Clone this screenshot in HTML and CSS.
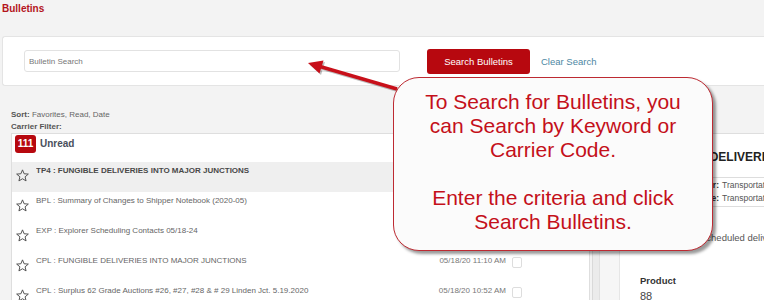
FILE: index.html
```html
<!DOCTYPE html>
<html lang="en">
<head>
    <meta charset="UTF-8">
    <title>Bulletins</title>
    <link rel="stylesheet" href="styles.css">
</head>
<body>
    <h1 class="page-title">Bulletins</h1>

    <!-- Search bar -->
    <div class="search-panel">
        <input type="text" class="search-input" placeholder="Bulletin Search">
        <button type="button" class="search-btn">Search Bulletins</button>
        <a href="#" class="clear-link">Clear Search</a>
    </div>

    <div class="sort-info">
        <div><b>Sort:</b> Favorites, Read, Date</div>
        <div><b>Carrier Filter:</b></div>
    </div>

    <div class="main">
        <!-- Bulletin list -->
        <div class="list-panel">
            <div class="list-head">
                <span class="badge">111</span>
                <span class="unread">Unread</span>
            </div>
            <div class="row active">
                <svg class="star" viewBox="0 0 12 12"><path d="M6 .8l1.5 3.6 3.9.3-3 2.5.9 3.8L6 9 2.7 11l.9-3.8-3-2.5 3.9-.3z"/></svg>
                <span class="row-title">TP4 : FUNGIBLE DELIVERIES INTO MAJOR JUNCTIONS</span>
                <span class="row-date">05/18/20 2:15 PM</span>
                <span class="check"></span>
            </div>
            <div class="row">
                <svg class="star" viewBox="0 0 12 12"><path d="M6 .8l1.5 3.6 3.9.3-3 2.5.9 3.8L6 9 2.7 11l.9-3.8-3-2.5 3.9-.3z"/></svg>
                <span class="row-title">BPL : Summary of Changes to Shipper Notebook (2020-05)</span>
                <span class="row-date">05/18/20 1:40 PM</span>
                <span class="check"></span>
            </div>
            <div class="row">
                <svg class="star" viewBox="0 0 12 12"><path d="M6 .8l1.5 3.6 3.9.3-3 2.5.9 3.8L6 9 2.7 11l.9-3.8-3-2.5 3.9-.3z"/></svg>
                <span class="row-title">EXP : Explorer Scheduling Contacts 05/18-24</span>
                <span class="row-date">05/18/20 11:32 AM</span>
                <span class="check"></span>
            </div>
            <div class="row">
                <svg class="star" viewBox="0 0 12 12"><path d="M6 .8l1.5 3.6 3.9.3-3 2.5.9 3.8L6 9 2.7 11l.9-3.8-3-2.5 3.9-.3z"/></svg>
                <span class="row-title">CPL : FUNGIBLE DELIVERIES INTO MAJOR JUNCTIONS</span>
                <span class="row-date">05/18/20 11:10 AM</span>
                <span class="check"></span>
            </div>
            <div class="row">
                <svg class="star" viewBox="0 0 12 12"><path d="M6 .8l1.5 3.6 3.9.3-3 2.5.9 3.8L6 9 2.7 11l.9-3.8-3-2.5 3.9-.3z"/></svg>
                <span class="row-title">CPL : Surplus 62 Grade Auctions #26, #27, #28 &amp; # 29 Linden Jct. 5.19.2020</span>
                <span class="row-date">05/18/20 10:52 AM</span>
                <span class="check"></span>
            </div>
        </div>

        <!-- Bulletin detail -->
        <div class="detail-panel">
            <div class="strip-dark"></div>
            <div class="strip-light"></div>
            <div class="detail-body">
                <h2 class="detail-title">FUNGIBLE DELIVERIES INTO MAJOR JUNCTIONS</h2>
                <div class="meta-box">
                    <span class="meta-label">Carrier:</span><span>Transportation</span>
                    <span class="meta-label">Type:</span><span>Transportation</span>
                </div>
                <p class="detail-note">Scheduled deliveries into major junctions</p>
                <div class="product-label">Product</div>
                <div class="product-value">88</div>
            </div>
        </div>
    </div>

    <!-- Tutorial callout -->
    <svg class="arrow" width="764" height="300" viewBox="0 0 764 300">
        <g transform="translate(1.5 1.5)" opacity="0.25">
            <line x1="397" y1="89" x2="320" y2="66.5" stroke="#000" stroke-width="3.5"/>
            <polygon points="308,63 323.5,60.5 319.5,73.5" fill="#000"/>
        </g>
        <line x1="397" y1="89" x2="320" y2="66.5" stroke="#c8101a" stroke-width="3.5"/>
        <polygon points="308,63 323.5,60.5 319.5,73.5" fill="#c8101a"/>
    </svg>
    <div class="callout">
        <p>To Search for Bulletins, you can Search by Keyword or Carrier Code.</p>
        <p>Enter the criteria and click Search Bulletins.</p>
    </div>
</body>
</html>
```

FILE: styles.css
```css
body {
    margin: 0;
    height: 300px;
    background: #f3f3f3;
    font-family: "Liberation Sans", Arial, sans-serif;
    color: #555;
    overflow: hidden;
}
.page-title {
    margin: 0;
    padding: 2px 2px;
    font-size: 10px;
    line-height: 13px;
    color: #b3141c;
}
.search-panel {
    margin: 19px 0 0 2px;
    height: 48px;
    background: #fff;
    border: 1px solid #e4e4e4;
    border-right: none;
    border-radius: 3px 0 0 3px;
    display: flex;
    align-items: center;
    padding-left: 21px;
}
.search-input {
    width: 376px;
    height: 22px;
    box-sizing: border-box;
    border: 1px solid #e2e2e2;
    border-radius: 3px;
    padding: 0 4px;
    font-family: inherit;
    font-size: 8px;
    color: #777;
}
.search-input::placeholder {
    color: #777;
}
.search-btn {
    margin-left: 27px;
    width: 103px;
    height: 25px;
    border: none;
    border-radius: 3px;
    background: #b7080f;
    color: #fff;
    font-family: inherit;
    font-size: 9.5px;
}
.clear-link {
    margin-left: 11px;
    font-size: 9.5px;
    color: #4d87a3;
    text-decoration: none;
}
.sort-info {
    margin: 23px 0 0 11px;
    font-size: 8px;
    line-height: 12px;
    color: #666;
}
.sort-info b {
    color: #555;
}
.main {
    display: flex;
    margin-left: 11px;
    height: 167px;
    overflow: hidden;
}
.list-panel {
    width: 579px;
    flex-shrink: 0;
    box-sizing: border-box;
    background: #fff;
    border: 1px solid #dedede;
    border-bottom: none;
}
.list-head {
    height: 28px;
    display: flex;
    align-items: flex-start;
    padding: 1px 0 0 3px;
    box-sizing: border-box;
}
.badge {
    width: 21px;
    height: 18px;
    border-radius: 3px;
    background: #b7080f;
    color: #fff;
    font-size: 10px;
    font-weight: bold;
    line-height: 18px;
    text-align: center;
}
.unread {
    margin-left: 4px;
    font-size: 10px;
    font-weight: bold;
    line-height: 18px;
    color: #4a4f5c;
}
.row {
    height: 30px;
    display: flex;
    align-items: flex-start;
    padding-left: 4px;
    font-size: 8px;
    color: #666;
}
.row.active {
    background: #efefef;
}
.row.active .row-title {
    font-weight: bold;
    color: #484848;
}
.star {
    width: 13px;
    height: 13px;
    margin-top: 7px;
    fill: none;
    stroke: #505050;
    stroke-width: 0.9;
    stroke-linejoin: round;
}
.row-title {
    margin: 4px 0 0 7px;
    line-height: 10px;
    flex: 1;
    white-space: nowrap;
    overflow: hidden;
}
.row-date {
    margin-top: 4px;
    line-height: 10px;
    color: #777;
    white-space: nowrap;
}
.check {
    width: 10px;
    height: 11px;
    box-sizing: border-box;
    margin: 5px 67px 0 6px;
    border: 1px solid #ddd;
    border-radius: 2px;
}
.detail-panel {
    flex: 1;
    min-width: 0;
    margin-left: 2px;
    display: flex;
    background: #fff;
    border-top: 1px solid #dedede;
}
.strip-dark {
    width: 6px;
    flex-shrink: 0;
    background: #ebebeb;
    border-left: 1px solid #d9d9d9;
}
.strip-light {
    width: 19px;
    flex-shrink: 0;
    background: #f6f6f6;
    border-left: 1px solid #e0e0e0;
    border-right: 1px solid #e6e6e6;
}
.detail-body {
    flex: 1;
    min-width: 0;
    padding-left: 20px;
    white-space: nowrap;
    overflow: hidden;
}
.detail-title {
    margin: 16px 0 0 5px;
    font-size: 12px;
    line-height: 14px;
    color: #222;
}
.meta-box {
    margin: 13px 0 0 31px;
    padding: 1px 0;
    border-top: 1px solid #ddd;
    border-bottom: 1px solid #ddd;
    display: grid;
    grid-template-columns: 48px 200px;
    column-gap: 3px;
    font-size: 8.5px;
    line-height: 13px;
    color: #555;
}
.meta-label {
    text-align: right;
    font-weight: bold;
    color: #333;
}
.detail-note {
    margin: 25px 0 0 60px;
    font-size: 9.5px;
    line-height: 12px;
    color: #555;
}
.product-label {
    margin-top: 31px;
    font-size: 9.5px;
    font-weight: bold;
    line-height: 12px;
    color: #333;
}
.product-value {
    margin-top: 2px;
    font-size: 11px;
    line-height: 14px;
    color: #444;
}
.arrow {
    position: absolute;
    left: 0;
    top: 0;
    pointer-events: none;
}
.callout {
    position: absolute;
    left: 393px;
    top: 77px;
    width: 320px;
    height: 174px;
    box-sizing: border-box;
    padding-top: 12px;
    background: #fbfbfb;
    border: 1.5px solid #bd2a32;
    border-radius: 26px;
    box-shadow: 3px 3px 3px rgba(0, 0, 0, 0.4);
    text-align: center;
    color: #c4101a;
    font-size: 21px;
    line-height: 24px;
}
.callout p {
    margin: 0 14px 24px;
}
```
